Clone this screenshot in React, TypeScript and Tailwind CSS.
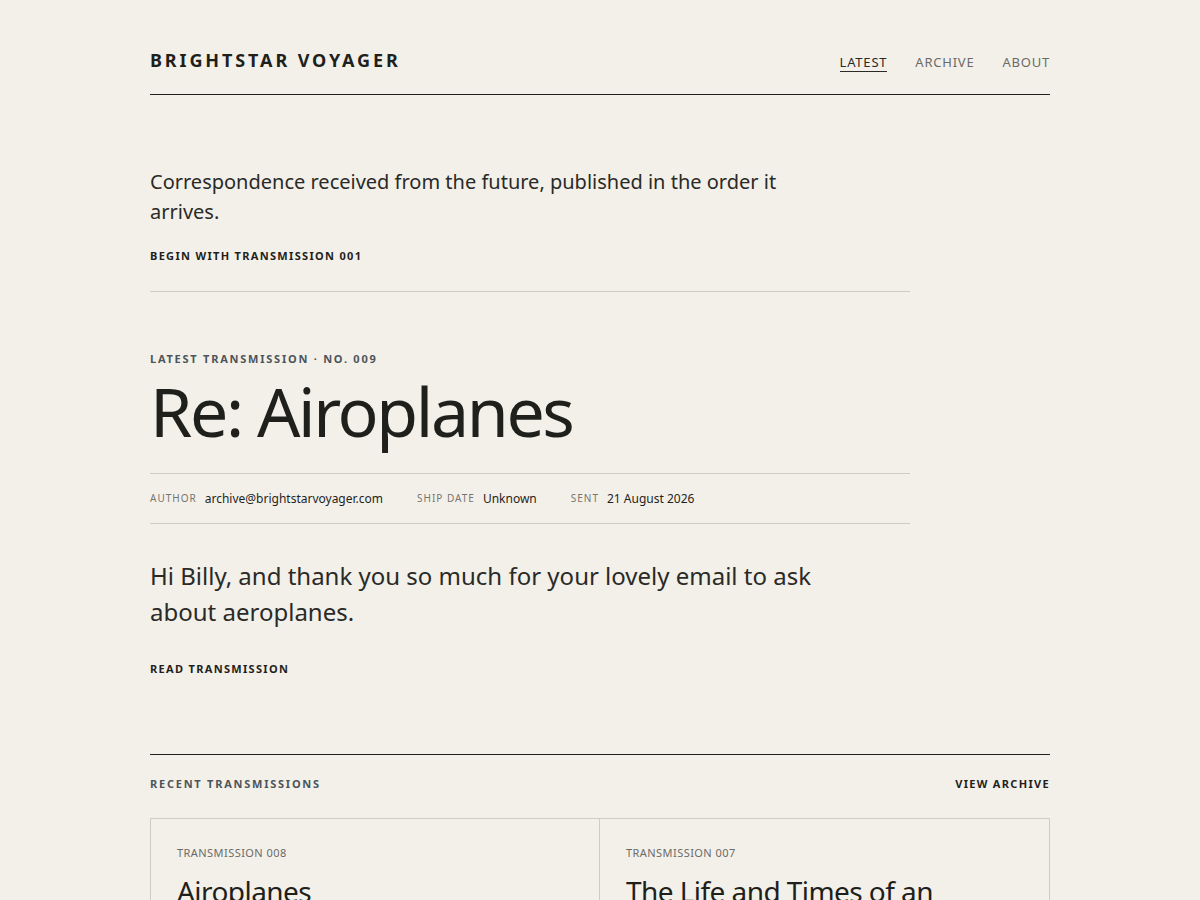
import React from 'react';

const recent = [
  { no: '008', title: 'Airoplanes' },
  { no: '007', title: 'The Life and Times of an' },
];

function Header() {
  return (
    <header className="flex items-end justify-between border-b border-[#1f1f1c] pt-[49px] pb-[23px]">
      <a className="text-[18px] font-bold tracking-[0.16em] leading-[22px] text-[#1f1f1c]">
        BRIGHTSTAR VOYAGER
      </a>
      <nav className="flex gap-7 text-[13px] tracking-[0.06em] leading-[16px] translate-y-[1px]">
        <a className="text-[#2a2a27] border-b border-[#2a2a27] pb-[1px]">LATEST</a>
        <a className="text-[#6b6b66]">ARCHIVE</a>
        <a className="text-[#6b6b66]">ABOUT</a>
      </nav>
    </header>
  );
}

function MetaItem({ label, value }: { label: string; value: string }) {
  return (
    <div className="flex items-center gap-2">
      <span className="text-[10px] tracking-[0.1em] leading-[14px] text-[#76766f] -translate-y-[1px]">
        {label}
      </span>
      <span className="text-[12px] leading-[16px] text-[#1f1f1c]">{value}</span>
    </div>
  );
}

export default function App() {
  return (
    <div
      className="min-h-screen bg-[#f3f0ea] text-[#1f1f1c]"
      style={{ fontFamily: '"Noto Sans", "Open Sans", sans-serif' }}
    >
      <div className="mx-auto w-[900px]">
        <Header />

        <section className="w-[760px] border-b border-[#cfccc5] pt-[72px] pb-[27px]">
          <p className="max-w-[660px] text-[20px] leading-[30px] text-[#2a2a27]">
            Correspondence received from the future, published in the order it arrives.
          </p>
          <a className="mt-[21px] block text-[11px] font-bold tracking-[0.12em] leading-[16px]">
            BEGIN WITH TRANSMISSION 001
          </a>
        </section>

        <article className="w-[760px] pt-[59px]">
          <div className="text-[11px] font-bold tracking-[0.16em] leading-[16px] text-[#4c555a]">
            LATEST TRANSMISSION · NO. 009
          </div>
          <h1 className="mt-[1px] text-[68px] leading-[86px] tracking-[-0.035em] text-[#1f1f1c]">
            Re: Airoplanes
          </h1>
          <div className="mt-[19px] flex h-[51px] items-center gap-[34px] border-y border-[#cfccc5]">
            <MetaItem label="AUTHOR" value="archive@brightstarvoyager.com" />
            <MetaItem label="SHIP DATE" value="Unknown" />
            <MetaItem label="SENT" value="21 August 2026" />
          </div>
          <p className="mt-[34px] max-w-[680px] text-[24px] leading-[36px] text-[#2a2a27]">
            Hi Billy, and thank you so much for your lovely email to ask about aeroplanes.
          </p>
          <a className="mt-[31px] block text-[11px] font-bold tracking-[0.12em] leading-[16px]">
            READ TRANSMISSION
          </a>
        </article>

        <section className="mt-[77px] border-t border-[#1f1f1c]">
          <div className="flex items-center justify-between pt-[21px] pb-[26px]">
            <span className="text-[11px] font-bold tracking-[0.16em] leading-[16px] text-[#4c555a]">
              RECENT TRANSMISSIONS
            </span>
            <a className="text-[11px] font-bold tracking-[0.12em] leading-[16px]">VIEW ARCHIVE</a>
          </div>
          <div className="grid grid-cols-2 border border-[#cfccc5]">
            {recent.map((r, i) => (
              <div
                key={r.no}
                className={`px-[26px] pt-[26px] pb-8 ${i === 0 ? 'border-r border-[#cfccc5]' : ''}`}
              >
                <div className="text-[11px] tracking-[0.04em] leading-[16px] text-[#6b6b66]">
                  TRANSMISSION {r.no}
                </div>
                <h2 className="mt-[12px] text-[28px] leading-[36px] tracking-[-0.02em]">{r.title}</h2>
              </div>
            ))}
          </div>
        </section>
      </div>
    </div>
  );
}
